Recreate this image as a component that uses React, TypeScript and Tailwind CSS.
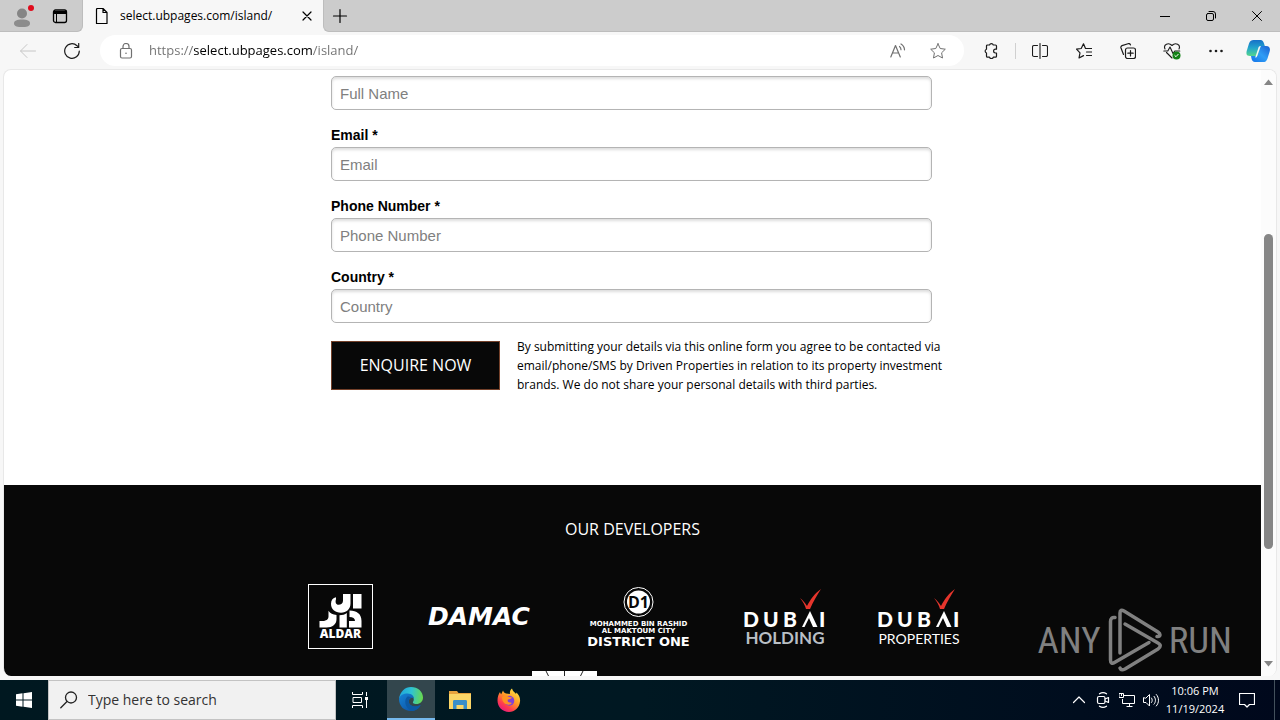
import React from "react";

type IconProps = { children: React.ReactNode; size?: number; className?: string };

function Icon({ children, size = 16, className = "" }: IconProps) {
  return (
    <svg
      width={size}
      height={size}
      viewBox={`0 0 ${size} ${size}`}
      fill="none"
      stroke="currentColor"
      strokeWidth="1"
      strokeLinecap="round"
      strokeLinejoin="round"
      className={className}
      aria-hidden="true"
    >
      {children}
    </svg>
  );
}

function TabStrip() {
  return (
    <header className="flex h-8 shrink-0 bg-[#f7f7f7] text-black">
      <div className="flex w-[83px] items-center rounded-br-md border-r border-b border-[#bdbdbd] bg-[#cccccc]">
        <button aria-label="Profile" className="flex h-8 w-11 items-center justify-center">
          <Icon size={24}>
            <circle cx="12" cy="9.500" r="5" fill="#858585" stroke="none" />
            <path d="M4 19.500c0-3 3-4 8-4s8 1 8 4-4 3.500-8 3.500-8-.5-8-3.500Z" fill="#8c8c8c" stroke="none" />
            <circle cx="21" cy="4" r="3" fill="#e00b1c" stroke="none" />
          </Icon>
        </button>
        <button aria-label="Tab actions" className="flex h-8 w-8 items-center justify-center">
          <Icon>
            <rect x="1.500" y="2" width="13" height="12.500" rx="2" strokeWidth="1.300" />
            <path d="M2 3.500h12v2H2z" fill="currentColor" />
            <path d="M4.500 5v9" />
          </Icon>
        </button>
      </div>
      <div className="flex w-[240px] items-center gap-[10px] pr-2 pl-[11px]">
        <Icon>
          <path d="M3.500.5h5.500l4 4v11H2.500V1.500a1 1 0 0 1 1-1Z M9 .5v4h4" strokeWidth="1.200" />
        </Icon>
        <span className="flex-1 text-xs">select.ubpages.com/island/</span>
        <button aria-label="Close tab" className="flex h-4 w-4 items-center justify-center">
          <Icon size={10}>
            <path d="m1 1 8 8M9 1 1 9" strokeWidth="1.200" />
          </Icon>
        </button>
      </div>
      <div className="flex flex-1 items-center justify-between rounded-bl-md border-b border-l border-[#bdbdbd] bg-[#cccccc]">
        <button aria-label="New tab" className="flex h-8 w-8 items-center justify-center">
          <Icon>
            <path d="M8 1.500v13M1.500 8h13" strokeWidth="1.200" />
          </Icon>
        </button>
        <div className="flex">
          <button aria-label="Minimize" className="flex h-8 w-[46px] items-center justify-center">
            <Icon size={10}>
              <path d="M0 5.500h10" />
            </Icon>
          </button>
          <button aria-label="Restore" className="flex h-8 w-[46px] items-center justify-center">
            <Icon size={10}>
              <rect x=".5" y="2.500" width="7" height="7" rx="1.500" />
              <path d="M3 .5h4a2.500 2.500 0 0 1 2.500 2.500v4" />
            </Icon>
          </button>
          <button aria-label="Close window" className="flex h-8 w-[46px] items-center justify-center">
            <Icon size={10}>
              <path d="m.5.5 9 9M9.500.5l-9 9" />
            </Icon>
          </button>
        </div>
      </div>
    </header>
  );
}

const toolButton = "flex h-8 w-11 shrink-0 items-center justify-center";

function Toolbar() {
  return (
    <div className="flex h-[37px] shrink-0 items-center bg-[#f7f7f7] pr-[2px] pl-[6px] text-[#1b1b1b]">
      <button aria-label="Back" className={`${toolButton} text-[#c6c6c6]`}>
        <Icon>
          <path d="M15.500 8H.8M7 1.500.5 8 7 14.500" />
        </Icon>
      </button>
      <button aria-label="Refresh" className={toolButton}>
        <Icon>
          <path d="M15.300 8A7.300 7.300 0 1 1 13 2.700l1.500 1.500M14.700.5v4h-4" strokeWidth="1.200" />
        </Icon>
      </button>
      <div className="mr-[5px] ml-[6px] flex h-[31px] min-w-0 flex-1 items-center rounded-full bg-white pr-[18px] pl-[18px] text-[#707070]">
        <Icon>
          <rect x="2.500" y="5.500" width="11" height="9.500" rx="1.500" strokeWidth="1.200" />
          <path d="M5 5.500V3.500a3 3 0 0 1 6 0v2" strokeWidth="1.200" />
          <circle cx="8" cy="10.200" r=".8" fill="currentColor" stroke="none" />
        </Icon>
        <input
          aria-label="Address"
          type="text"
          defaultValue="https://select.ubpages.com/island/"
          className="ml-[15px] min-w-0 flex-1 bg-[linear-gradient(to_right,#707070_45px,#000_45px,#000_163px,#707070_163px)] bg-clip-text text-[13px] text-transparent outline-none"
        />
        <button aria-label="Read aloud" className="mr-6 flex h-8 w-4 items-center justify-center">
          <Icon>
            <path d="M.8 14 5.500 2.500 10.300 14M2.500 10h6.200M9.500 3.500a4 4 0 0 1 1.500 3.200M11 1a7 7 0 0 1 3.500 5.800" strokeWidth="1.200" />
          </Icon>
        </button>
        <button aria-label="Add to favorites" className="flex h-8 w-4 items-center justify-center">
          <Icon>
            <path d="m8 .8 2.200 4.700 5.100.7-3.700 3.600.9 5.200L8 12.500 3.500 15l.9-5.200L.7 6.200l5.100-.7L8 .8Z" />
          </Icon>
        </button>
      </div>
      <button aria-label="Extensions" className={toolButton}>
        <Icon>
          <path d="M4.500 2h2a2 2 0 0 1 3.800 0h2.200a1 1 0 0 1 1 1v3.200h-1a1.900 1.900 0 0 0 0 3.800h1v3.200a1 1 0 0 1-1 1h-2.200a2 2 0 0 1-3.800 0h-2a1 1 0 0 1-1-1V10a2 2 0 0 1 0-3.800V3a1 1 0 0 1 1-1Z" strokeWidth="1.200" />
        </Icon>
      </button>
      <span className="mx-[2px] h-4 w-px bg-[#d0d0d0]" />
      <button aria-label="Split screen" className={toolButton}>
        <Icon>
          <path d="M8 .5v15M5.500 2.500H2a1.500 1.500 0 0 0-1.500 1.500v8A1.500 1.500 0 0 0 2 13.500h3.500M10.500 2.500H14A1.500 1.500 0 0 1 15.500 4v8a1.500 1.500 0 0 1-1.500 1.500h-3.500" strokeWidth="1.100" />
        </Icon>
      </button>
      <button aria-label="Favorites" className={toolButton}>
        <Icon>
          <path d="M10 5.500h5.500M10.500 9h5M10.500 12.500h5M9.500 5.500 7.500.8 5.200 5.500.5 6.200 4 9.800 3 15l4.500-2.400" strokeWidth="1.200" />
        </Icon>
      </button>
      <button aria-label="Collections" className={toolButton}>
        <Icon>
          <rect x="5.500" y="5" width="10" height="10.500" rx="2" strokeWidth="1.200" />
          <path d="M10.500 7.500V13M7.800 10.200h5.400M3.500 11.500 1 5A2 2 0 0 1 2 2.600L8 .7a2 2 0 0 1 2.500 1.200" strokeWidth="1.200" />
        </Icon>
      </button>
      <button aria-label="Browser essentials" className={toolButton}>
        <Icon size={18}>
          <path d="M2 7C0 2.500 5.500 0 9 3.500 12.500 0 18 2.500 16 7M3.500 10.500 9 16M.8 9h4l2.200-4 3 6.500L11.800 9h5" strokeWidth="1.100" />
          <circle cx="13.500" cy="13.500" r="4" fill="#138217" stroke="none" />
          <path d="m11.800 13.500 1.200 1.200 2.200-2.400" stroke="white" />
        </Icon>
      </button>
      <button aria-label="Settings and more" className={toolButton}>
        <Icon>
          <g fill="currentColor" stroke="none">
            <circle cx="2.500" cy="8" r="1.300" />
            <circle cx="8" cy="8" r="1.300" />
            <circle cx="13.500" cy="8" r="1.300" />
          </g>
        </Icon>
      </button>
      <button aria-label="Copilot" className="flex h-8 w-10 shrink-0 items-center justify-center">
        <Icon size={24}>
          <defs>
            <linearGradient id="copilotLeft" x1=".3" y1="0" x2=".3" y2="1">
              <stop offset="0" stopColor="#1670c8" />
              <stop offset=".5" stopColor="#22a5cc" />
              <stop offset="1" stopColor="#55d68c" />
            </linearGradient>
            <linearGradient id="copilotRight" x1="1" y1="0" x2="0" y2="1">
              <stop offset="0" stopColor="#1a5fd0" />
              <stop offset=".5" stopColor="#2f9df5" />
              <stop offset="1" stopColor="#1272e8" />
            </linearGradient>
          </defs>
          <path d="M9 23c-2 0-3-1.500-3.500-3.500L5 17h5l3.500-10H20c4 0 4.500 3 3.500 6l-2 6.500c-1 3-2.500 3.500-4.500 3.500Z" fill="url(#copilotRight)" stroke="none" />
          <path d="M7.500 1h7c2 0 2.800 1.200 3.500 3.500L18.800 7h-4L11.500 17H4C0 17 0 14 1 11L3 4.500C4 1.500 5.500 1 7.500 1Z" fill="url(#copilotLeft)" stroke="none" />
          <path d="M14.800 7 11.200 17c-.4 1-1 1.500-2 1.500L12.500 8.500c.4-1 1-1.500 2.300-1.500Z" fill="#f7f7f7" stroke="none" />
        </Icon>
      </button>
    </div>
  );
}

const fields = [
  { id: "full-name", label: "Full Name", type: "text", showLabel: false },
  { id: "email", label: "Email", type: "email", showLabel: true },
  { id: "phone", label: "Phone Number", type: "tel", showLabel: true },
  { id: "country", label: "Country", type: "text", showLabel: true },
];

function EnquiryForm() {
  return (
    <form
      onSubmit={(event) => event.preventDefault()}
      className="mx-auto w-full max-w-[601px] pt-[6px] pb-[91px] text-black"
    >
      <div className="flex flex-col gap-[15px]">
        {fields.map((field) => (
          <div key={field.id} className="flex flex-col gap-[2px]">
            {field.showLabel && (
              <label
                htmlFor={field.id}
                className="font-['Liberation_Sans',sans-serif] text-sm leading-5 font-bold"
              >
                {field.label} *
              </label>
            )}
            <input
              id={field.id}
              type={field.type}
              aria-label={field.showLabel ? undefined : field.label}
              placeholder={field.label}
              className="h-[34px] w-full rounded-[5px] border border-[#b4b4b4] bg-white px-2 font-['Liberation_Sans',sans-serif] text-[15px] shadow-[inset_0_2px_3px_#dddddd] outline-none placeholder:text-[#808080]"
            />
          </div>
        ))}
      </div>
      <div className="mt-[14px] flex items-start gap-[17px]">
        <button
          type="submit"
          className="mt-1 h-[49px] w-[169px] shrink-0 border border-[#74412a] bg-[#080808] pb-[2px] font-['Open_Sans',sans-serif] text-base text-white"
        >
          ENQUIRE NOW
        </button>
        <p className="-mr-4 flex-1 font-['Open_Sans',sans-serif] text-xs leading-[19px]">
          By submitting your details via this online form you agree to be contacted via
          email/phone/SMS by Driven Properties in relation to its property investment brands. We do
          not share your personal details with third parties.
        </p>
      </div>
    </form>
  );
}

function AldarLogo() {
  return (
    <svg width="65" height="65" viewBox="0 0 65 65" role="img" aria-label="Aldar">
      <rect x=".5" y=".5" width="64" height="64" fill="none" stroke="white" />
      <g fill="white">
        <path d="M45 10h8.500v14.500h-8.500zM35 10h7.500v9.500c0 5.500-4 9.200-9.500 9.200-6 0-10-3.700-10-9 0-3.700 2-6 5-6.500v2c-1 3 0 5.500 2.500 5.500s4.500-1.500 4.500-4z" />
        <path d="M20.500 26.700c1.500 2.500 4.500 4 8 4.300v4c0 5.500-4 8.500-10 8.500h-7v-6.500h3c3.500 0 6-1.500 6-4.500z" />
        <path d="M31.500 31.200c3 0 5.500-.7 7.300-2.200v14.500h-7.300zM41.500 26.500c7.500 0 12 3.500 12 10.500v6.500H41V37h6c0-2.500-2-4-5.500-4z" />
      </g>
      <text x="32.500" y="53.500" textAnchor="middle" fill="white" fontFamily="Open Sans, sans-serif" fontWeight="800" fontSize="12">
        ALDAR
      </text>
    </svg>
  );
}

function DamacLogo() {
  return (
    <svg width="105" height="24" viewBox="0 0 105 24" overflow="visible" role="img" aria-label="Damac">
      <text x="1" y="20" fill="white" fontFamily="DejaVu Sans, sans-serif" fontWeight="700" fontStyle="italic" fontSize="25">
        DAMAC
      </text>
    </svg>
  );
}

function DistrictOneLogo() {
  return (
    <svg width="105" height="62" viewBox="0 0 105 62" overflow="visible" role="img" aria-label="Mohammed Bin Rashid Al Maktoum City District One">
      <circle cx="52.500" cy="16" r="14.500" fill="none" stroke="white" />
      <circle cx="52.500" cy="16" r="11.500" fill="white" />
      <text x="52.500" y="22" textAnchor="middle" fill="#080808" fontFamily="Open Sans, sans-serif" fontWeight="700" fontSize="16">
        D1
      </text>
      <g fill="white" textAnchor="middle" fontFamily="DejaVu Sans, sans-serif" fontWeight="700">
        <text x="52.500" y="40" fontSize="7">MOHAMMED BIN RASHID</text>
        <text x="52.500" y="47" fontSize="7">AL MAKTOUM CITY</text>
        <text x="52.500" y="60" fontSize="13">DISTRICT ONE</text>
      </g>
    </svg>
  );
}

function DubaiLogo({ unit }: { unit: "HOLDING" | "PROPERTIES" }) {
  const holding = unit === "HOLDING";
  return (
    <svg width="80" height="58" viewBox="0 0 80 58" overflow="visible" role="img" aria-label={`Dubai ${unit}`}>
      <path d="M55 10c3 2 5 5 7 8 3-6 8-13 14-17-4 6-8 13-11 20h-4c-1-4-3-7-6-11Z" fill="#e5352c" />
      <path d="m65 23 7.500 16H68l-4-9-4.500 9H57z" fill="white" />
      <g fill="white" fontFamily="Lato, sans-serif" fontWeight="900" fontSize="21">
        <text x="-2" y="39">D</text>
        <text x="18" y="39">U</text>
        <text x="38" y="39">B</text>
        <text x="74" y="39">I</text>
      </g>
      {holding ? (
        <text x="40" y="56" textAnchor="middle" fill="#b9bfc5" fontFamily="Lato, sans-serif" fontWeight="700" fontSize="17">
          HOLDING
        </text>
      ) : (
        <text x="40" y="56" textAnchor="middle" fill="white" fontFamily="Lato, sans-serif" fontSize="14">
          PROPERTIES
        </text>
      )}
    </svg>
  );
}

function Developers() {
  return (
    <section className="flex flex-col items-center bg-[#080808] pt-8 text-white">
      <h2 className="font-['Open_Sans',sans-serif] text-base leading-6">OUR DEVELOPERS</h2>
      <div className="mt-[43px] flex items-center gap-[54px] pl-[2px]">
        <AldarLogo />
        <DamacLogo />
        <DistrictOneLogo />
        <DubaiLogo unit="HOLDING" />
        <DubaiLogo unit="PROPERTIES" />
      </div>
      <svg width="65" height="65" viewBox="0 0 65 65" className="mt-[22px] mr-[136px]" aria-hidden="true">
        <rect width="65" height="65" fill="white" />
        <path d="m14 0 8 16M32.500 0v16M51 0l-8 16" stroke="#222" fill="none" />
      </svg>
    </section>
  );
}

function Scrollbar() {
  return (
    <div className="flex w-[15px] shrink-0 flex-col items-center bg-[#fcfcfc] py-2" aria-hidden="true">
      <Icon size={9}>
        <path d="M0 7 4.500 1.500 9 7Z" fill="#858585" stroke="none" />
      </Icon>
      <div className="flex w-full flex-1 flex-col items-center">
        <span className="h-[147px]" />
        <span className="h-[315px] w-[9px] rounded-full bg-[#868686]" />
      </div>
      <Icon size={9}>
        <path d="M0 2 4.500 7.500 9 2Z" fill="#858585" stroke="none" />
      </Icon>
    </div>
  );
}

function Watermark() {
  return (
    <div className="pointer-events-none absolute right-11 bottom-1 flex items-center gap-[6px] font-['Roboto_Condensed','Liberation_Sans_Narrow','Liberation_Sans',sans-serif] text-[37px] leading-none text-[#808080]">
      <span>ANY</span>
      <svg width="56" height="64" viewBox="0 0 56 64" fill="none" stroke="#808080" strokeWidth="3.500" strokeLinejoin="round" strokeLinecap="round" aria-hidden="true">
        <path d="M8 9.500c-3-.5-4.500 1-4.500 4V52c0 3 1.500 4 4 2.500L42 34.500" />
        <path d="M13 45V5c0-3 1.500-3.500 4-2L51 24c3 2 2.500 5-1 4.500" />
        <path d="M13 60c1 2.500 3 2 5 1L51 41c3-2 3-4.500 0-6L18 16" />
      </svg>
      <span>RUN</span>
    </div>
  );
}

const taskButton = "flex h-10 w-12 shrink-0 items-center justify-center";
const trayButton = "flex h-10 w-6 shrink-0 items-center justify-center";

function Taskbar() {
  return (
    <footer className="flex h-10 shrink-0 bg-linear-to-r from-[#001820] via-[#001822] to-[#00081c] text-white">
      <button aria-label="Start" className={taskButton}>
        <Icon>
          <path d="M0 2.300 6.500 1.300v6.200H0zM7.500 1.200 16 0v7.500H7.500zM0 8.500h6.500v6.200L0 13.700zM7.500 8.500H16V16l-8.500-1.200z" fill="white" stroke="none" />
        </Icon>
      </button>
      <label className="flex w-72 items-center gap-[10px] border border-[#c3c3c3] bg-[#f1f1f1] pl-[11px] text-[#222]">
        <Icon size={18}>
          <circle cx="11" cy="6.500" r="5.500" strokeWidth="1.300" />
          <path d="M7 10.500.8 16.800" strokeWidth="1.300" />
        </Icon>
        <input
          aria-label="Type here to search"
          type="search"
          placeholder="Type here to search"
          className="min-w-0 flex-1 bg-transparent text-sm outline-none placeholder:text-[#333]"
        />
      </label>
      <div className="flex gap-px">
        <button aria-label="Task view" className={taskButton}>
          <Icon>
            <path d="M.5.5v2h10v-2M.5 15.500v-2h10v2M1.500 5.500h8v5h-8zM14.500.5v3M14.500 8.500v7" strokeLinecap="square" />
            <path d="M13 5h3v3h-3z" fill="white" stroke="none" />
          </Icon>
        </button>
        <button aria-label="Microsoft Edge" className={`${taskButton} ml-[2px] border-b-2 border-[#76b9ed] bg-[#33464d]`}>
          <Icon size={24}>
            <defs>
              <linearGradient id="edgeTop" x1="0" y1=".4" x2="1" y2=".5">
                <stop offset="0" stopColor="#1fa5dc" />
                <stop offset=".5" stopColor="#2fc3d3" />
                <stop offset="1" stopColor="#69d94c" />
              </linearGradient>
              <linearGradient id="edgeLow" x1="0" y1="0" x2="1" y2="1">
                <stop offset="0" stopColor="#1583d5" />
                <stop offset="1" stopColor="#0c4a9c" />
              </linearGradient>
            </defs>
            <path d="M0 12C1 4.500 6 0 12 0c7 0 12 4.800 12 10.500 0 4-3 6.500-6.500 6.500-3 0-4.500-1-3-3 .8-1.500.5-6-5.500-6-5 0-8 2-9 4Z" fill="url(#edgeTop)" stroke="none" />
            <path d="M0 12c1-4 4.500-5.500 8.500-5.500 4.500 0 6.500 3 6.500 5-3-2-6 1-5 4.500 1.200 3.500 7 4.500 11.500 2-2 4-6 6-9.500 6C5 24 0 19 0 12Z" fill="url(#edgeLow)" stroke="none" />
            <path d="M8.500 9.500C4.500 13 6 21 12.500 24 17 24 20 21.500 21.700 18c-4.700 2.500-10.500 1.500-11.700-2-.8-3 .5-4.500 2-5.500-1-.8-2-1-3.500-1Z" fill="#0c59a4" stroke="none" />
          </Icon>
        </button>
        <button aria-label="File Explorer" className={taskButton}>
          <Icon size={22}>
            <path d="M0 2h8l1.500 2H22v16H0z" fill="#e8a33d" stroke="none" />
            <path d="M0 5h22v15H0z" fill="#fbd667" stroke="none" />
            <path d="M4 20v-7.500c0-1 .5-1.500 1.500-1.500h11c1 0 1.500.5 1.500 1.500V20h-3.500v-4h-7v4Z" fill="#3a8fc9" stroke="none" />
          </Icon>
        </button>
        <button aria-label="Firefox" className={taskButton}>
          <Icon size={24}>
            <defs>
              <linearGradient id="foxBody" x1=".9" y1="0" x2=".2" y2="1">
                <stop offset="0" stopColor="#fff04a" />
                <stop offset=".45" stopColor="#ff9a26" />
                <stop offset=".75" stopColor="#ff3b4e" />
                <stop offset="1" stopColor="#e31587" />
              </linearGradient>
            </defs>
            <path d="M3 4c.2 1 .6 1.700 1.200 2.200L6 2.500c.5 1.500 1.500 2.500 3 3L13 6c-.5-2 .5-4.500 2-5.500.5 2.500 3 4 4 5.500l.5-1.500C22 7 23.500 10 23 13.500 22.500 19.500 17.500 24 12 24 5.500 24 .5 19 .5 12.500.5 9 1.500 6 3 4Z" fill="url(#foxBody)" stroke="none" />
            <circle cx="12.300" cy="12.800" r="5" fill="#8140d8" stroke="none" />
            <path d="M5 9c2-2 5-1.500 7 0l3 .5c-1 1.500-3 1.500-4 2-1 1 0 3 2 3 1.500 0 2 .5 1 1.500-3 2-9 0-9-7Z" fill="#ff9322" stroke="none" />
          </Icon>
        </button>
      </div>
      <div className="ml-auto flex">
        <button aria-label="Show hidden icons" className={trayButton}>
          <Icon size={14}>
            <path d="m1.500 9.500 5.500-5.500 5.500 5.500" strokeWidth="1.200" />
          </Icon>
        </button>
        <button aria-label="Meet now" className={trayButton}>
          <Icon>
            <rect x="2.500" y="4.500" width="7.500" height="7" rx="1.500" strokeWidth="1.200" />
            <path d="m10 7 3.500-1.500v5L10 9M4.500 1.800c2-1.300 5-1.300 7 0M4.500 14.200c2 1.300 5 1.300 7 0" strokeWidth="1.200" />
          </Icon>
        </button>
        <button aria-label="Network" className={trayButton}>
          <Icon>
            <path d="M5.500 3.500h10v8H3.500v-4M8 14.500h5M10.500 11.500v3M.5 1.500h4v4h-4zM2.500 1.500v2" strokeLinecap="square" />
          </Icon>
        </button>
        <button aria-label="Volume" className={trayButton}>
          <Icon>
            <path d="M.5 6v4.500h2.500l3.500 3.500V2.500L3 6ZM8.500 6c1 1.200 1 3.300 0 4.500M11 4.300c2 2.200 2 5.700 0 7.900M13.300 2.500c3 3.200 3 8.300 0 11.500" />
          </Icon>
        </button>
        <button className="w-16 text-center text-[11px] leading-[18px]">
          10:06 PM
          <br />
          11/19/2024
        </button>
        <button aria-label="Notifications" className="mr-[5px] flex h-10 w-12 items-center justify-center border-r border-[#43505c] pr-2">
          <Icon>
            <path d="M.5 1.500h15v11h-5L8 15l-2.500-2.500h-5z" strokeWidth="1.200" />
          </Icon>
        </button>
      </div>
    </footer>
  );
}

export default function App() {
  return (
    <div className="flex h-screen flex-col overflow-hidden bg-[#f7f7f7] font-['Open_Sans','Noto_Sans',sans-serif]">
      <TabStrip />
      <Toolbar />
      <div className="relative mx-[3px] mb-1 flex min-h-0 flex-1 overflow-hidden rounded-lg border border-b-0 border-[#e8e8e8] bg-white">
        <main className="min-w-0 flex-1 overflow-hidden">
          <div className="pr-[2px]">
            <EnquiryForm />
          </div>
          <Developers />
        </main>
        <Scrollbar />
        <Watermark />
      </div>
      <Taskbar />
    </div>
  );
}
